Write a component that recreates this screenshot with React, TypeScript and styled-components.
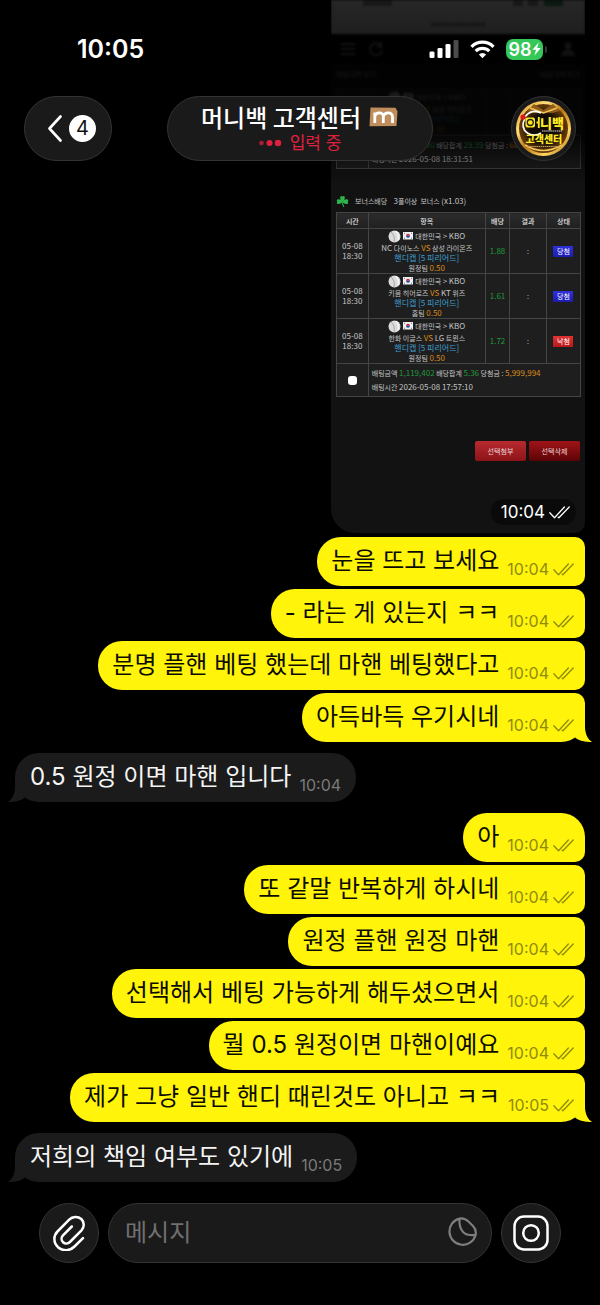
import React, { useState } from 'react';
import styled, { createGlobalStyle, css } from 'styled-components';

const sans = `Inter, "Noto Sans CJK KR", sans-serif`;
const korean = `"Noto Sans CJK KR", "Noto Sans", sans-serif`;

const GlobalStyle = createGlobalStyle`
  *, *::before, *::after { box-sizing: border-box; }
  body { margin: 0; background: #000; color: #fff; font-family: ${sans}; }
  button, input { font-family: inherit; color: inherit; }
  button { border: 0; padding: 0; background: none; cursor: pointer; }
`;

const Screen = styled.div`
  position: relative;
  min-height: 100vh;
  display: flex;
  flex-direction: column;
  background: #000;
`;

/* ---------- header ---------- */

const Header = styled.header`
  position: absolute;
  inset: 0 0 auto 0;
  z-index: 2;
  padding-bottom: 24px;
  background: linear-gradient(
    to bottom,
    rgba(0, 0, 0, 0.84) 0,
    rgba(0, 0, 0, 0.9) 64px,
    rgba(0, 0, 0, 0.86) 132px,
    rgba(0, 0, 0, 0.4) 160px,
    transparent 100%
  );
`;

const StatusBar = styled.div`
  display: flex;
  align-items: center;
  justify-content: space-between;
  height: 96px;
  padding: 2px 53px 0 77px;
`;

const Clock = styled.time`
  font-size: 25px;
  line-height: 28px;
  font-weight: 600;
`;

const StatusIcons = styled.div`
  display: flex;
  align-items: center;
  gap: 11px;
`;

const Battery = styled.div`
  display: flex;
  align-items: center;
  gap: 2px;
`;

const BatteryBody = styled.span`
  display: flex;
  align-items: center;
  justify-content: center;
  width: 37px;
  height: 21px;
  border-radius: 7px;
  background: #34c759;
  font-size: 18px;
  line-height: 21px;
  font-weight: 600;
`;

const BatteryNub = styled.span`
  width: 2px;
  height: 7px;
  border-radius: 0 2px 2px 0;
  background: #2c3a40;
`;

const NavRow = styled.div`
  display: flex;
  justify-content: space-between;
  padding: 0 24px;
`;

const glass = css`
  background: #1a1a1a;
  border: 1px solid #343434;
`;

const BackButton = styled.button`
  ${glass}
  display: flex;
  align-items: center;
  justify-content: center;
  gap: 7px;
  width: 88px;
  height: 65px;
  padding-left: 8px;
  border-radius: 33px;
`;

const Count = styled.span`
  width: 27px;
  height: 27px;
  border-radius: 50%;
  background: #fff;
  color: #111;
  font-size: 20px;
  line-height: 27px;
  text-align: center;
`;

const TitlePill = styled.div`
  ${glass}
  display: flex;
  flex-direction: column;
  align-items: center;
  width: 266px;
  height: 65px;
  margin-left: 30px;
  padding-top: 5px;
  border-radius: 33px;
`;

const Title = styled.h1`
  display: flex;
  align-items: center;
  gap: 8px;
  margin: 0;
  font-family: ${korean};
  font-size: 24px;
  line-height: 30px;
  font-weight: 500;
`;

const Typing = styled.p`
  display: flex;
  align-items: center;
  gap: 8px;
  margin: 0;
  font-size: 17px;
  line-height: 22px;
  color: #e0203f;
`;

const AvatarButton = styled.button`
  ${glass}
  display: flex;
  align-items: center;
  justify-content: center;
  width: 65px;
  height: 65px;
  margin-left: 54px;
  border-radius: 50%;
`;

/* ---------- betting slip photo ---------- */

const Photo = styled.article`
  align-self: flex-end;
  width: 254px;
  margin-bottom: 1px;
  border-radius: 0 0 10px 24px;
  background: #121212;
  color: #c4c4c4;
  font-family: ${korean};
  font-size: 7px;
  line-height: 10px;
  overflow: hidden;
`;

const Soft = styled.div`
  filter: blur(1px);
`;

const PhoneStrip = styled.div`
  height: 34px;
  background: #f0f0f0;

  svg { display: block; }
`;

const SiteNav = styled.div`
  display: flex;
  align-items: center;
  gap: 14px;
  height: 30px;
  padding: 0 10px;
  background: #000;
  color: #999;

  & > :last-child { margin-left: auto; }
`;

const SlipHead = styled.div`
  display: flex;
  justify-content: space-between;
  height: 25px;
  padding: 5px 5px 0;
`;

const SlipTitle = styled.h2`
  display: flex;
  align-items: center;
  margin: 24px 5px 3px;
  height: 16px;
  gap: 6px;
  font-size: 7px;
  line-height: 16px;
  font-weight: 400;
  white-space: pre;
`;

const SlipTable = styled.table`
  width: 245px;
  margin: 0 5px;
  table-layout: fixed;
  border-collapse: collapse;
  background: #1e1e1e;

  th, td { border: 1px solid #454545; padding: 0; text-align: center; }
  th { height: 16px; background: linear-gradient(#2c2c2c, #202020); color: #e2e2e2; font-weight: 500; }
`;

const SlipCell = styled.td<{ $tone?: string }>`
  height: 45px;
  color: ${(p) => p.$tone ?? 'inherit'};
`;

const League = styled.div`
  display: flex;
  align-items: center;
  justify-content: center;
  gap: 2px;
  height: 13px;
`;

const Num = styled.span<{ $tone?: string }>`
  font-size: 8px;
  color: ${(p) => p.$tone ?? 'inherit'};
`;

const SummaryCell = styled.td`
  && { height: 33px; padding: 0 3px; text-align: left; line-height: 13px; white-space: nowrap; }
`;

const Tick = styled.input`
  appearance: none;
  display: inline-block;
  width: 9px;
  height: 9px;
  margin: 2px 0 0;
  border-radius: 3px;
  background: #fff;
`;

const Result = styled.span<{ $lost?: boolean }>`
  display: inline-block;
  width: 20px;
  height: 11px;
  line-height: 11px;
  color: #fff;
  background: ${(p) => (p.$lost ? 'linear-gradient(#e03434, #b81818)' : 'linear-gradient(#3030d8, #1c1cb0)')};
`;

const SlipActions = styled.div`
  display: flex;
  justify-content: flex-end;
  gap: 3px;
  margin: 44px 5px 38px;
`;

const SlipButton = styled.button<{ $dark?: boolean }>`
  width: 51px;
  height: 20px;
  border-radius: 2px;
  background: ${(p) => (p.$dark ? 'linear-gradient(#a01418, #5c0306)' : 'linear-gradient(#b82a30, #8c1418)')};
  color: #ead6d6;
  font-size: 7px;
  line-height: 20px;
`;

const PhotoTime = styled.div`
  display: flex;
  align-items: center;
  gap: 4px;
  width: fit-content;
  height: 26px;
  margin: 0 9px 8px auto;
  padding: 0 6px 0 10px;
  border-radius: 13px;
  background: #0a0a0a;
  color: #fff;
  font-family: ${sans};
  font-size: 17px;
  line-height: 26px;
`;

/* ---------- messages ---------- */

const Chat = styled.main`
  display: flex;
  flex-direction: column;
  gap: 11px;
  padding: 0 15px;
`;

const Group = styled.section`
  display: flex;
  flex-direction: column;
  gap: 3px;
`;

const Bubble = styled.div<{ $out?: boolean; $first?: boolean; $last?: boolean }>`
  position: relative;
  align-self: ${(p) => (p.$out ? 'flex-end' : 'flex-start')};
  display: flex;
  align-items: flex-start;
  gap: 8px;
  height: 49px;
  padding: ${(p) => (p.$out ? '0 11px 0 14px' : '0 15px')};
  border-radius: ${(p) =>
    p.$out ? `24px ${p.$first ? 24 : 10}px ${p.$last ? 24 : 10}px 24px` : '24px'};
  background: ${(p) => (p.$out ? '#fff40a' : '#1b1b1b')};
  color: ${(p) => (p.$out ? '#0c0c00' : '#f4f4f4')};
`;

const MessageText = styled.p`
  margin: 0;
  font-size: 24px;
  line-height: 48px;
  white-space: nowrap;
`;

const Stamp = styled.span<{ $out?: boolean }>`
  display: flex;
  align-items: center;
  gap: 4px;
  padding-top: 22px;
  color: ${(p) => (p.$out ? '#8f8a0c' : '#7a7a7a')};
  font-size: 16px;
  line-height: 20px;
`;

const TailSvg = styled.svg<{ $out?: boolean }>`
  position: absolute;
  bottom: 0;
  ${(p) => (p.$out ? 'right: -7px;' : 'left: -7px; transform: scaleX(-1);')}
  fill: ${(p) => (p.$out ? '#fff40a' : '#1b1b1b')};
`;

/* ---------- composer ---------- */

const Composer = styled.form`
  display: flex;
  gap: 9px;
  padding: 21px 39px 42px;
`;

const RoundButton = styled.button`
  ${glass}
  flex: none;
  display: flex;
  align-items: center;
  justify-content: center;
  width: 60px;
  height: 60px;
  border-radius: 50%;
`;

const Field = styled.div`
  ${glass}
  flex: 1;
  min-width: 0;
  display: flex;
  align-items: center;
  padding: 0 14px 0 16px;
  border-radius: 30px;
`;

const TextInput = styled.input`
  flex: 1;
  min-width: 0;
  border: 0;
  outline: 0;
  padding: 0;
  background: none;
  font-size: 24px;
  line-height: 32px;

  &::placeholder { color: #707070; opacity: 1; }
`;

/* ---------- icons ---------- */

const Checks = () => (
  <svg width="21" height="13" viewBox="0 0 21 13" fill="none" stroke="currentColor" strokeWidth="1.3" strokeLinecap="round" strokeLinejoin="round" aria-hidden="true">
    <path d="M0.8 6.8 5.5 11.8 15.4 1M9.2 11.2 9.9 11.8 20.2 1" />
  </svg>
);

const Tail = ({ out }: { out?: boolean }) => (
  <TailSvg $out={out} width="22" height="26" viewBox="0 0 22 26" aria-hidden="true">
    <path d="M15 0V12C15.500 18 17.500 23 22 26C15 26 9.500 25 5 21.500L13 2Z" />
  </TailSvg>
);

const Signal = () => (
  <svg width="30" height="20" viewBox="0 0 30 20" fill="#fff" aria-hidden="true">
    <rect x="0.500" y="12.500" width="5" height="6.500" rx="1.300" />
    <rect x="8.500" y="9" width="5" height="10" rx="1.300" />
    <rect x="16.500" y="5" width="5" height="14" rx="1.300" />
    <rect x="24.500" y="1" width="5" height="18" rx="1.300" fill="#4b4b4b" />
  </svg>
);

const Wifi = () => (
  <svg width="25" height="19" viewBox="0 0 25 19" fill="none" stroke="#fff" strokeWidth="3.200" aria-hidden="true">
    <path d="M1.500 6.800A15.500 15.500 0 0 1 23.500 6.800" />
    <path d="M5.700 11.200A9.600 9.600 0 0 1 19.300 11.200" />
    <path d="M8.900 14.500A5 5 0 0 1 16.100 14.500L12.500 18.200Z" fill="#fff" stroke="none" />
  </svg>
);

const Bolt = () => (
  <svg width="9" height="14" viewBox="0 0 9 14" fill="#fff" aria-hidden="true">
    <path d="M6.800 0.300 0.400 7.700H4L2.400 13.700 8.700 6H5.200Z" />
  </svg>
);

const Chevron = () => (
  <svg width="14" height="27" viewBox="0 0 14 27" fill="none" stroke="#fff" strokeWidth="2.600" strokeLinecap="round" strokeLinejoin="round" aria-hidden="true">
    <path d="M12.500 1.500 1.500 13.500 12.500 25.500" />
  </svg>
);

const Badge = () => (
  <svg width="29" height="20" viewBox="0 0 29 20" aria-hidden="true">
    <path d="M1.500 0.500 26.500 0.800 28.500 4.500 27.500 19 0.500 19.300Z" fill="#c08e5c" />
    <path d="M5.800 16V5.500M5.800 9.500C6.500 5 14.300 4.500 14.300 9.500V16M14.300 9.500C15.300 5 23.500 4.500 23.500 9.500V16" fill="none" stroke="#fff" strokeWidth="2.800" />
  </svg>
);

const TypingDots = () => (
  <svg width="24" height="8" viewBox="0 0 24 8" fill="currentColor" aria-hidden="true">
    <circle cx="3.500" cy="4" r="2.300" opacity="0.750" />
    <circle cx="11.500" cy="4" r="3" />
    <circle cx="20" cy="4" r="3.200" />
  </svg>
);

const AvatarArt = () => (
  <svg width="59" height="59" viewBox="0 0 59 59" role="img" aria-label="머니백 고객센터">
    <defs>
      <linearGradient id="gold" x1="0" y1="0" x2="1" y2="1">
        <stop offset="0" stopColor="#d98a18" />
        <stop offset="0.300" stopColor="#ffe07a" />
        <stop offset="0.500" stopColor="#b8730f" />
        <stop offset="0.750" stopColor="#ffd75e" />
        <stop offset="1" stopColor="#8a4c08" />
      </linearGradient>
      <radialGradient id="core">
        <stop offset="0.550" stopColor="#120b05" />
        <stop offset="1" stopColor="#6b3d0a" />
      </radialGradient>
    </defs>
    <circle cx="29.500" cy="29.500" r="27.500" fill="url(#gold)" />
    <circle cx="29.500" cy="29.500" r="24.500" fill="url(#core)" />
    <path d="M13 12 20 5 29.500 11 39 5 46 12 38 14 29.500 13 21 14Z" fill="#8f5d18" />
    <path d="M16 9 29.500 14 43 9M11 46Q29 57 48 46" stroke="#f2c65a" strokeWidth="1.500" fill="none" />
    <path d="M11 19C4 33 19 40 27 34M11 18C15 12 22 11 27 14" stroke="#fff" strokeWidth="1.600" fill="none" />
    <circle cx="9" cy="18" r="2.600" fill="#e01818" />
    <rect x="11.500" y="18.500" width="9.500" height="10" rx="2" fill="#ffea20" />
    <circle cx="16.300" cy="23.500" r="3" fill="none" stroke="#222" strokeWidth="1.300" />
    <path d="M24.800 18V29M22.500 23.500H24.800" stroke="#ffea20" strokeWidth="1.800" />
    <text x="26" y="28.500" fontSize="13" fontWeight="900" fill="#ffea20" fontFamily="Noto Sans CJK KR">니백</text>
    <path d="M28 32H48" stroke="#ddd" strokeWidth="1.200" strokeDasharray="1.500 0.600" />
    <text x="11.500" y="43.500" fontSize="10" fontWeight="900" fill="#ffea20" fontFamily="Noto Sans CJK KR">고객센터</text>
    <path d="M12 47.500H47" stroke="#c8a460" strokeWidth="1" strokeDasharray="1.500 0.600" />
  </svg>
);

const Clover = () => (
  <svg width="13" height="13" viewBox="0 0 13 13" fill="#2fb54e" aria-hidden="true">
    <path d="M6.500 6.500C3.500 5 3.800 1 5.200 1 6 1 6.500 1.800 6.500 1.800S7 1 7.800 1C9.200 1 9.500 5 6.500 6.500Z" />
    <path d="M6.500 6.500C5 9.500 1 9.500 0.800 8 0.700 7.200 1.500 6.700 1.500 6.700S0.500 6 0.800 5.200C1.300 3.800 5 4 6.500 6.500Z" />
    <path d="M6.500 6.500C8 9.500 12 9.500 12.200 8 12.300 7.200 11.500 6.700 11.500 6.700S12.500 6 12.200 5.200C11.700 3.800 8 4 6.500 6.500Z" />
    <path d="M6 6.500H7Q7 10 8.500 12H7.300Q6 10 6 6.500Z" />
  </svg>
);

const Ball = () => (
  <svg width="13" height="13" viewBox="0 0 13 13" aria-hidden="true">
    <circle cx="6.500" cy="6.500" r="6" fill="#dcdcdc" />
    <path d="M3 1.800Q7.500 6 6 12.300" stroke="#a39490" strokeWidth="0.800" fill="none" />
    <path d="M8 1.200Q11 4 10.500 10" stroke="#f8f8f8" strokeWidth="1.500" fill="none" />
  </svg>
);

const Flag = () => (
  <svg width="10" height="8" viewBox="0 0 10 8" aria-hidden="true">
    <rect width="10" height="7.500" fill="#f0f0f0" />
    <path d="M3 3.800a2 2 0 0 1 4 0Z" fill="#d0243c" />
    <path d="M3 3.800a2 2 0 0 0 4 0Z" fill="#1c4ba0" />
    <path d="M1 1.800 2 0.900M8 0.900 9 1.800M1 5.800 2 6.700M8 6.700 9 5.800" stroke="#333" strokeWidth="0.700" />
  </svg>
);

const Clip = () => (
  <svg width="32" height="36" viewBox="0 0 32 36" fill="none" stroke="#fff" strokeWidth="2.500" strokeLinecap="round" strokeLinejoin="round" aria-hidden="true">
    <path d="M30 23.200 21.500 31.500C17 36 10 36.500 5 32.200C0 27.500 0.500 20.500 4.500 16.500L16.200 4.600C19.500 1.200 24.800 1 28.300 4C31.600 7.200 31.400 12.200 28.500 15.300L16.900 27C15 28.900 12 29 10.100 27.300C8 25.300 8.200 22.200 10 20.300L18.800 11.500" />
  </svg>
);

const Sticker = () => (
  <svg width="29" height="30" viewBox="0 0 29 30" fill="none" stroke="#7e7e7e" strokeWidth="2.200" strokeLinejoin="round" aria-hidden="true">
    <path d="M11.500 1.600C15.500 0.800 18.500 2.600 21 5L25 9C27.500 11.500 28.300 14.500 27.600 18A13.300 13.300 0 1 1 11.500 1.600Z" />
    <path d="M11.500 1.600C11 9 12.500 12.500 15.300 15.200C18 17.700 21.500 18.700 27.600 18" />
  </svg>
);

const Camera = () => (
  <svg width="36" height="36" viewBox="0 0 36 36" fill="none" stroke="#fff" strokeWidth="2.500" aria-hidden="true">
    <rect x="1.500" y="1.500" width="33" height="33" rx="9.500" />
    <circle cx="18" cy="18" r="7.800" />
  </svg>
);

/* status and address bars of the phone inside the photo */
const PhoneChrome = () => (
  <svg width="254" height="34" viewBox="0 0 254 34" aria-hidden="true">
    <path d="M32 0H61V6H32Z" fill="#999" />
    <path d="M182 0H192V6H182ZM197 0H207V6H197Z" fill="#999" />
    <path d="M213 0H232V6H213Z" fill="#4a9a60" />
    <path d="M100 24.500H155" stroke="#999" strokeWidth="4" strokeDasharray="4 1" />
  </svg>
);

/* ---------- data ---------- */

const green = '#1f9a3c';
const orange = '#d88a1c';
const blue = '#3f9fd0';

type Game = {
  home: React.ReactNode;
  away: React.ReactNode;
  pick: string;
  odds: string;
  lost?: boolean;
};

const games: Game[] = [
  { home: <><Num>NC</Num> 다이노스</>, away: '삼성 라이온즈', pick: '원정팀', odds: '1.88' },
  { home: '키움 히어로즈', away: <><Num>KT</Num> 위즈</>, pick: '홈팀', odds: '1.61' },
  { home: '한화 이글스', away: <><Num>LG</Num> 트윈스</>, pick: '원정팀', odds: '1.72', lost: true },
];

const incomingFirst = [{ text: '0.5 원정 이면 마핸 입니다', time: '10:04' }];
const incomingLast = [{ text: '저희의 책임 여부도 있기에', time: '10:05' }];
const outgoingFirst = [
  { text: '눈을 뜨고 보세요', time: '10:04' },
  { text: '- 라는 게 있는지 ㅋㅋ', time: '10:04' },
  { text: '분명 플핸 베팅 했는데 마핸 베팅했다고', time: '10:04' },
  { text: '아득바득 우기시네', time: '10:04' },
];
const outgoingSecond = [
  { text: '아', time: '10:04' },
  { text: '또 같말 반복하게 하시네', time: '10:04' },
  { text: '원정 플핸 원정 마핸', time: '10:04' },
  { text: '선택해서 베팅 가능하게 해두셨으면서', time: '10:04' },
  { text: '뭘 0.5 원정이면 마핸이예요', time: '10:04' },
  { text: '제가 그냥 일반 핸디 때린것도 아니고 ㅋㅋ', time: '10:05' },
];

type Message = { text: string; time: string };

const Messages = ({ items, out, follows }: { items: Message[]; out?: boolean; follows?: boolean }) => (
  <>
    {items.map((m, i) => {
      const last = i === items.length - 1;
      return (
        <Bubble key={m.text} $out={out} $first={i === 0 && !follows} $last={last}>
          <MessageText>{m.text}</MessageText>
          <Stamp $out={out}>
            <time>{m.time}</time>
            {out && <Checks />}
          </Stamp>
          {last && <Tail out={out} />}
        </Bubble>
      );
    })}
  </>
);

const Col = styled.col<{ $share: number }>`
  width: ${(p) => p.$share}%;
`;

const Columns = () => (
  <colgroup>
    <Col $share={13} />
    <Col $share={48} />
    <Col $share={10} />
    <Col $share={15} />
    <Col $share={14} />
  </colgroup>
);

const Match = ({ game }: { game: Game }) => (
  <SlipCell>
    <League><Ball /><Flag /><span>대한민국 <Num>&gt; KBO</Num></span></League>
    <div>{game.home} <Num $tone={orange}>VS</Num> {game.away}</div>
    <Num as="div" $tone={blue}>핸디캡 [5 피리어드]</Num>
    <div>{game.pick} <Num $tone={orange}>0.50</Num></div>
  </SlipCell>
);

const GameRow = ({ game }: { game: Game }) => (
  <tr>
    <SlipCell><Num>05-08<br />18:30</Num></SlipCell>
    <Match game={game} />
    <SlipCell $tone={green}><Num>{game.odds}</Num></SlipCell>
    <SlipCell>:</SlipCell>
    <SlipCell><Result $lost={game.lost}>{game.lost ? '낙첨' : '당첨'}</Result></SlipCell>
  </tr>
);

const Summary = ({ stake, odds, prize, time }: { stake: string; odds: string; prize: string; time: string }) => (
  <tr>
    <td><Tick type="checkbox" aria-label="선택" /></td>
    <SummaryCell colSpan={4}>
      배팅금액 <Num $tone={green}>{stake}</Num> 배당합계 <Num $tone={green}>{odds}</Num> 당첨금 : <Num $tone={orange}>{prize}</Num>
      <br />
      배팅시간 <Num>{time}</Num>
    </SummaryCell>
  </tr>
);

const BettingSlip = () => (
  <Photo>
    <Soft>
      <PhoneStrip><PhoneChrome /></PhoneStrip>
      <SiteNav>
        <svg width="14" height="12" viewBox="0 0 14 12" stroke="currentColor" strokeWidth="2" aria-hidden="true"><path d="M0 1H14M0 6H14M0 11H14" /></svg>
        <svg width="14" height="14" viewBox="0 0 14 14" fill="none" stroke="currentColor" strokeWidth="2" aria-hidden="true"><path d="M12 4A6 6 0 1 0 13 8M12 0V5H8" /></svg>
        <svg width="14" height="14" viewBox="0 0 14 14" fill="currentColor" aria-hidden="true"><circle cx="7" cy="4" r="3.500" /><path d="M0 14Q0 8 7 8T14 14Z" /></svg>
      </SiteNav>
      <SlipHead><span>배팅내역 보기</span><span>배팅내역 보기</span></SlipHead>
      <SlipTable>
        <Columns />
        <tbody>
          <tr>
            <SlipCell />
            <Match game={games[0]} />
            <SlipCell />
            <SlipCell />
            <SlipCell />
          </tr>
        </tbody>
      </SlipTable>
    </Soft>
    <SlipTable>
      <Columns />
      <tbody>
        <Summary stake="1,170,000" odds="29.39" prize="600" time="2026-05-08 18:31:51" />
      </tbody>
    </SlipTable>
    <SlipTitle><Clover /><span>보너스배당    <Num>3</Num>폴이상  보너스 <Num>(x1.03)</Num></span></SlipTitle>
    <SlipTable>
      <Columns />
      <thead>
        <tr><th>시간</th><th>항목</th><th>배당</th><th>결과</th><th>상태</th></tr>
      </thead>
      <tbody>
        {games.map((g) => <GameRow key={g.odds} game={g} />)}
        <Summary stake="1,119,402" odds="5.36" prize="5,999,994" time="2026-05-08 17:57:10" />
      </tbody>
    </SlipTable>
    <SlipActions>
      <SlipButton type="button">선택첨부</SlipButton>
      <SlipButton type="button" $dark>선택삭제</SlipButton>
    </SlipActions>
    <PhotoTime><time>10:04</time><Checks /></PhotoTime>
  </Photo>
);

export default function App() {
  const [draft, setDraft] = useState('');
  return (
    <Screen>
      <GlobalStyle />
      <Header>
        <StatusBar>
          <Clock>10:05</Clock>
          <StatusIcons>
            <Signal />
            <Wifi />
            <Battery><BatteryBody>98<Bolt /></BatteryBody><BatteryNub /></Battery>
          </StatusIcons>
        </StatusBar>
        <NavRow>
          <BackButton type="button" aria-label="뒤로"><Chevron /><Count>4</Count></BackButton>
          <TitlePill>
            <Title>머니백 고객센터<Badge /></Title>
            <Typing><TypingDots />입력 중</Typing>
          </TitlePill>
          <AvatarButton type="button" aria-label="프로필"><AvatarArt /></AvatarButton>
        </NavRow>
      </Header>
      <Chat>
        <Group>
          <BettingSlip />
          <Messages items={outgoingFirst} out follows />
        </Group>
        <Group><Messages items={incomingFirst} /></Group>
        <Group><Messages items={outgoingSecond} out /></Group>
        <Group><Messages items={incomingLast} /></Group>
      </Chat>
      <Composer onSubmit={(e) => e.preventDefault()}>
        <RoundButton type="button" aria-label="첨부"><Clip /></RoundButton>
        <Field>
          <TextInput aria-label="메시지" placeholder="메시지" value={draft} onChange={(e) => setDraft(e.target.value)} />
          <button type="button" aria-label="스티커"><Sticker /></button>
        </Field>
        <RoundButton type="button" aria-label="카메라"><Camera /></RoundButton>
      </Composer>
    </Screen>
  );
}
